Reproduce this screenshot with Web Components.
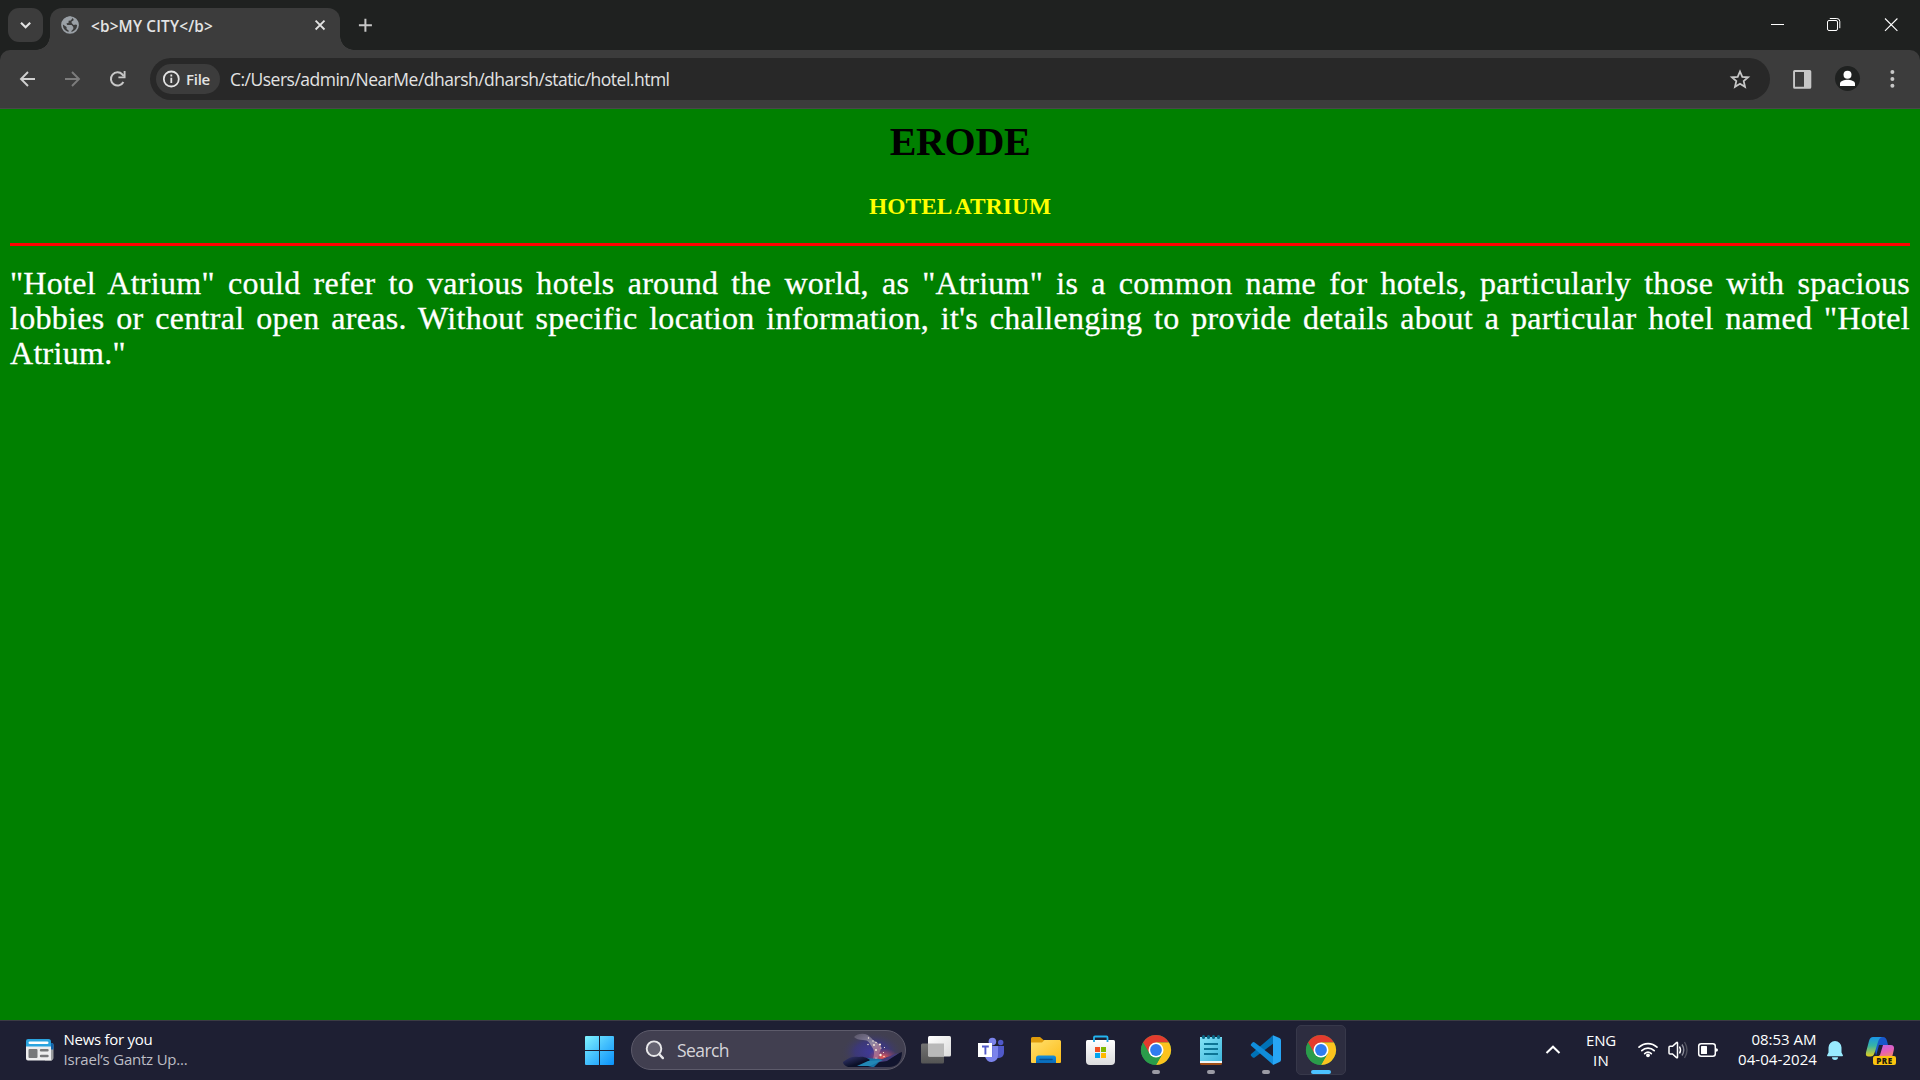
<!DOCTYPE html>
<html lang="en">
<head>
<meta charset="utf-8">
<title>MY CITY</title>
<style>
html,body{margin:0;height:100%;overflow:hidden;background:#1f2120}
body{font-family:"Open Sans","Noto Sans",sans-serif}
</style>
</head>
<body>
<desktop-screen></desktop-screen>
<script>
const define = (name, html, after) => {
  const t = document.createElement('template');
  t.innerHTML = html;
  customElements.define(name, class extends HTMLElement {
    constructor() {
      super();
      this.attachShadow({ mode: 'open' }).append(t.content.cloneNode(true));
    }
    connectedCallback() { if (after) after(this, this.shadowRoot); }
  });
};

/* Label that spreads its letters evenly to fill a given width. */
define('fit-text', `<style>
:host{display:block;white-space:nowrap;line-height:20px}
span{display:inline-block;white-space:pre}</style><span><slot></slot></span>`, (el, root) => {
  const s = root.querySelector('span');
  const w = +el.getAttribute('w');
  el.style.fontSize = el.getAttribute('size') + 'px';
  el.style.width = w + 'px';
  const nodes = root.querySelector('slot').assignedNodes({ flatten: true });
  const n = nodes.reduce((sum, node) => sum + node.textContent.length, 0);
  if (n) s.style.letterSpacing = ((w - s.getBoundingClientRect().width) / n) + 'px';
});

/* Icon box: width, height and view origin come from the "box" attribute. */
define('ui-icon', `<style>:host{display:block;flex:none}svg{display:block;overflow:hidden}</style><svg fill="none"></svg>`, (el, root) => {
  const svg = root.querySelector('svg');
  const b = el.getAttribute('box').split(' ');
  svg.setAttribute('viewBox', b.join(' '));
  svg.setAttribute('width', b[2]);
  svg.setAttribute('height', b[3]);
  svg.innerHTML = ICONS[el.getAttribute('name')];
});

const chrome = x => `<g transform="translate(${x} 1050)">
<circle r="15" fill="#2a9c4a"/>
<path d="M-13-7.5A15 15 0 0 1 13-7.5L0-7.5L-6.5 3.75Z" fill="#e33b2e"/>
<path d="M13-7.5A15 15 0 0 1 0 15L6.5 3.75L0-7.5Z" fill="#fcc31e"/>
<path d="M-13-7.5L-6.5 3.75A7.5 7.5 0 0 0 6.5 3.75L0 15A15 15 0 0 1-13-7.5Z" fill="#2a9c4a"/>
<circle r="7.5" fill="#fff"/><circle r="5.9" fill="#2f7cf0"/></g>`;

const ICONS = {
  chevron: '<path d="M21 22.7l4.6 4.6 4.6-4.6" stroke="#e3e3e3" stroke-width="2.1"/>',
  globe: '<circle cx="70" cy="25" r="8" stroke="#9aa0a6" stroke-width="1.7" fill="#3c3c3c"/><path d="M62.6 23C64 18.5 67 16.6 71 16.6L72.4 18.2L70.8 20.4L68.6 20.8V22.8L66.4 23.4L67.2 25H71.6L73.3 27V29L71.4 31V32.8A8 8 0 0 1 68.6 33V30.5L66.6 29V27L62.2 24ZM73.3 17.5A8.5 8.5 0 0 1 78.3 26L76 24.6L73.6 25L71.6 23V21.4L73.6 20.2Z" fill="#9aa0a6"/>',
  close: '<path d="M315.6 20.6l8.9 8.9m0-8.9l-8.9 8.9" stroke="#e3e3e3" stroke-width="1.8"/>',
  plus: '<path d="M365.4 18.8v13M358.9 25.3h13" stroke="#c7c7c7" stroke-width="2"/>',
  min: '<path d="M1771 24.5h13" stroke="#fff"/>',
  max: '<rect x="1827.5" y="20.5" width="10" height="10" rx="1.5" stroke="#fff"/><path d="M1829.8 18.5h7a3 3 0 0 1 3 3v6.7" stroke="#fff"/>',
  wclose: '<path d="M1885 18.5l12.4 12.4m0-12.4l-12.4 12.4" stroke="#fff" stroke-width="1.1"/>',
  back: '<path d="M35 79H21.5M28 72l-7 7 7 7" stroke="#d0d0d0" stroke-width="1.9"/>',
  fwd: '<path d="M65 79h13.5M72 72l7 7-7 7" stroke="#7c7c7c" stroke-width="1.9"/>',
  reload: '<path d="M123.4 82A6.6 6.6 0 1 1 122.4 74.5l1.4 1.7" stroke="#c7c7c7" stroke-width="2"/><path d="M124.6 71v6.4h-6.2" stroke="#c7c7c7" stroke-width="1.9"/>',
  info: '<circle cx="171.3" cy="79" r="7.5" stroke="#e3e3e3" stroke-width="1.8"/><path d="M171.3 77.7v5.2M171.3 74.6v1.9" stroke="#e3e3e3" stroke-width="1.8"/>',
  star: '<path d="M1740 71.5l2.3 5.3 5.8.5-4.4 3.8 1.3 5.7-5-3-5 3 1.3-5.7-4.4-3.8 5.8-.5z" stroke="#c7c7c7" stroke-width="1.8"/>',
  panel: '<path fill-rule="evenodd" d="M1794.7 70h15a1.6 1.6 0 0 1 1.6 1.6v15.6a1.6 1.6 0 0 1-1.6 1.6h-15a1.6 1.6 0 0 1-1.6-1.6V71.6a1.6 1.6 0 0 1 1.6-1.6zM1795 72v14.8h9V72z" fill="#c7c7c7"/>',
  user: '<circle cx="1847.5" cy="78.5" r="12.5" fill="#1f2120"/><circle cx="1847.5" cy="74.7" r="4" fill="#fff"/><path d="M1840 86v-2.2c0-3 4.6-4 7.5-4s7.5 1 7.5 4V86z" fill="#fff"/>',
  dots: '<g fill="#c7c7c7"><circle cx="1892.4" cy="72" r="2"/><circle cx="1892.4" cy="79" r="2"/><circle cx="1892.4" cy="85.8" r="2"/></g>',
  news: '<path d="M45 1043h6.5a2 2 0 0 1 2 2v12.5a3 3 0 0 1-3 3H45z" fill="#9a9c9e"/><path d="M48 1043h4a1.5 1.5 0 0 1 1.5 1.5v5H48z" fill="#0f62ab"/><path d="M26 1046h25v12.5a2 2 0 0 0 1 2H28a2 2 0 0 1-2-2z" fill="#eeeeef"/><path d="M28 1039h20.5a2.5 2.5 0 0 1 2.5 2.5v5H26V1041a2 2 0 0 1 2-2z" fill="#2ba4df"/><rect x="28.5" y="1041.5" width="20" height="2.6" rx="1.3" fill="#fff"/><rect x="28.5" y="1049" width="9" height="9" rx="1" fill="#77787a"/><path d="M41 1050.2h6.5M41 1056h6.5" stroke="#77787a" stroke-width="2.4" stroke-linecap="round"/>',
  start: '<defs><linearGradient id="w" gradientUnits="userSpaceOnUse" x1="585" y1="1036" x2="614" y2="1065"><stop stop-color="#80f3ff"/><stop offset=".5" stop-color="#43bffd"/><stop offset="1" stop-color="#0a91fb"/></linearGradient></defs><path d="M586 1036h13v14h-14v-13a1 1 0 0 1 1-1zM600 1036h13a1 1 0 0 1 1 1v13h-14zM585 1051h14v14h-13a1 1 0 0 1-1-1zM600 1051h14v13a1 1 0 0 1-1 1h-13z" fill="url(#w)"/>',
  search: '<circle cx="654" cy="1048.7" r="7.3" stroke="#e8e8ea" stroke-width="1.9" fill="#656371"/><path d="M659.3 1054.2l3.6 3.9" stroke="#e8e8ea" stroke-width="2.4" stroke-linecap="round"/>',
  volcano: '<defs><radialGradient id="h"><stop stop-color="#3f399a"/><stop offset=".55" stop-color="#3b3780" stop-opacity=".8"/><stop offset="1" stop-color="#413f51" stop-opacity="0"/></radialGradient><radialGradient id="r"><stop stop-color="#ef5c51"/><stop offset="1" stop-color="#a34470" stop-opacity="0"/></radialGradient><linearGradient id="g" x2=".6" y2="1"><stop stop-color="#696579" stop-opacity=".6"/><stop offset=".55" stop-color="#8d86a2"/><stop offset="1" stop-color="#a8688c"/></linearGradient><linearGradient id="b" x2="1" y2="1"><stop stop-color="#393b76"/><stop offset=".6" stop-color="#0b1028"/></linearGradient></defs><ellipse cx="872" cy="1052" rx="31" ry="20" fill="url(#h)"/><ellipse cx="883" cy="1057" rx="15" ry="9" fill="url(#r)"/><path d="M854 1037q4-4 11-3c4 1 6 4 8 6 6 3 9 6 8 9-2 4-2 6-3 10h-5c2-6 1-9-1-12-3-4-3-7-9-7q-6 0-9-3z" fill="url(#g)"/><path d="M845 1061q20-5 42-1l8 2-14 5h-32z" fill="#1672a5"/><path d="M843 1062c6-5 10-6 16-5 6-1 9 2 11 3l-6 5 8 2h-24q-5-2-5-5z" fill="url(#b)"/><path d="M902 1052c-4 1-6 4-11 5-6 0-8 3-12 5l-5 5h15c8 0 13-6 13-15z" fill="#11142e"/><path d="M899 1053c-6 1-10 4-17 6l-8 4 13-2z" fill="#453c7b"/><path d="M857 1066l11-5 15-1-13 6z" fill="#2287b5"/><g fill="#fff3df"><circle cx="868.5" cy="1038" r=".7"/><circle cx="873" cy="1041" r=".7"/><circle cx="868" cy="1044.5" r=".7"/><circle cx="876" cy="1042.5" r=".7"/><circle cx="874" cy="1045" r=".9"/><circle cx="880" cy="1044.5" r="1.1"/><circle cx="884.5" cy="1047.5" r=".6"/><circle cx="881" cy="1048" r=".6"/><circle cx="876" cy="1050" r=".9"/><circle cx="883.5" cy="1052.5" r=".6"/><circle cx="880.5" cy="1055" r="1.2"/><circle cx="884" cy="1056.5" r=".7"/><circle cx="876" cy="1058" r=".6"/></g>',
  taskview: '<defs><linearGradient id="a" x2="1" y2="1"><stop stop-color="#fff"/><stop offset="1" stop-color="#dcdcdc"/></linearGradient><linearGradient id="d" x2="0" y2="1"><stop stop-color="#727272"/><stop offset="1" stop-color="#545454"/></linearGradient></defs><rect x="921" y="1043.5" width="23" height="20" rx="1.5" fill="url(#d)"/><rect x="928" y="1036" width="23" height="20.5" rx="1.5" fill="url(#a)"/><path d="M928 1043.5h16v13h-14.5a1.5 1.5 0 0 1-1.5-1.5z" fill="#b9b9b9"/>',
  teams: '<circle cx="1000.7" cy="1042.5" r="2.7" fill="#5059c9"/><path d="M993 1046h11v6.5a5.5 5.5 0 0 1-8 5z" fill="#5059c9"/><circle cx="992.4" cy="1041.6" r="3.8" fill="#7b83eb"/><path d="M984 1046h14v9a6.5 6.5 0 0 1-13 1z" fill="#7b83eb"/><path d="M989 1043h3.5v14H987z" fill="#4d55b5" opacity=".45"/><rect x="978" y="1043" width="14" height="14" fill="#fff"/><path d="M982 1046.5h6.8M985.4 1046.5v8" stroke="#5059c9" stroke-width="1.9"/>',
  folder: '<defs><linearGradient id="f" x2="1" y2="1"><stop stop-color="#ffe06f"/><stop offset="1" stop-color="#fdbb16"/></linearGradient><linearGradient id="fb" x2="0" y2="1"><stop stop-color="#158edb"/><stop offset="1" stop-color="#0869b9"/></linearGradient></defs><path d="M1031 1043v-4.5a1.5 1.5 0 0 1 1.5-1.5h7.5l3.5 3H1060v5h-29z" fill="#df9b0b"/><path d="M1031 1042.5h11l2.5-2.5H1059.5a1.5 1.5 0 0 1 1.5 1.5V1062a1 1 0 0 1-1 1h-28a1 1 0 0 1-1-1z" fill="url(#f)"/><path d="M1036 1063v-5a2.5 2.5 0 0 1 2.5-2.5h15a2.5 2.5 0 0 1 2.5 2.5v5z" fill="url(#fb)"/><path d="M1040 1059.5h12" stroke="#064f91" stroke-width="1.5" stroke-linecap="round"/>',
  store: '<defs><linearGradient id="s" x2="0" y2="1"><stop stop-color="#fff"/><stop offset="1" stop-color="#dcdcdd"/></linearGradient></defs><path d="M1094 1042v-4.5a1 1 0 0 1 1-1h11.5a1 1 0 0 1 1 1v4.5" stroke="#23b4ef" stroke-width="1.8"/><path d="M1086 1041.5a1.5 1.5 0 0 1 1.5-1.5h26a1.5 1.5 0 0 1 1.5 1.5V1061a4 4 0 0 1-4 4h-21a4 4 0 0 1-4-4z" fill="url(#s)"/><path d="M1094 1040v2M1107.5 1040v2" stroke="#23a7df" stroke-width="1.8"/><path d="M1095 1047h5v5h-5z" fill="#f25022"/><path d="M1101 1047h5v5h-5z" fill="#7fba00"/><path d="M1095 1053h5v5h-5z" fill="#00a4ef"/><path d="M1101 1053h5v5h-5z" fill="#ffb900"/>',
  chrome1: chrome(1156),
  notepad: '<defs><linearGradient id="n" x2="1" y2="1"><stop stop-color="#84e3f6"/><stop offset="1" stop-color="#3fb7dc"/></linearGradient></defs><path d="M1200 1061h22v2.5a1.5 1.5 0 0 1-1.5 1.5h-19a1.5 1.5 0 0 1-1.5-1.5z" fill="#a14f16"/><path d="M1200 1037h22v26h-22z" fill="#eef6f8"/><path d="M1200 1038a1 1 0 0 1 1-1h20a1 1 0 0 1 1 1v23h-22z" fill="url(#n)"/><g fill="#0b6a89"><rect x="1202" y="1035" width="3" height="4" rx="1.5"/><rect x="1207" y="1035" width="3" height="4" rx="1.5"/><rect x="1212" y="1035" width="3" height="4" rx="1.5"/><rect x="1217" y="1035" width="3" height="4" rx="1.5"/></g><path d="M1204 1044h14M1204 1049h14M1204 1054h14" stroke="#0d7595" stroke-width="2"/>',
  vscode: '<path d="M1273 1035.3V1043.7L1254.7 1057.5q-1.2.7-2.2-.2l-1.3-1.3q-1-1.2.2-2.2z" fill="#0072b8"/><path d="M1254.7 1042.5q-1.2-.8-2.2.1l-1.3 1.3q-1 1.2.2 2.2L1273 1064.7V1056.5z" fill="#108ddb"/><path d="M1273 1035.2l6.5 2.7q1.5.7 1.5 2.3v19.6q0 1.6-1.5 2.3l-6.5 2.8z" fill="#27a5f5"/>',
  chrome2: chrome(1321),
  up: '<path d="M1546.5 1053l6.5-6.3 6.5 6.3" stroke="#fff" stroke-width="2"/>',
  wifi: '<g stroke="#fff" stroke-width="1.7" stroke-linecap="round"><path d="M1639 1047.2a13 13 0 0 1 18 0M1641.8 1050.6a9 9 0 0 1 12.4 0M1644.7 1053.6a5 5 0 0 1 6.6 0"/></g><circle cx="1648" cy="1055.3" r="1.9" fill="#fff"/>',
  volume: '<path d="M1669 1047.2a1 1 0 0 1 1-1h2.5l4-3.6q1-.7 1 .5v14q0 1.2-1 .5l-4-3.6h-2.5a1 1 0 0 1-1-1z" stroke="#fff" stroke-width="1.5"/><path d="M1679.5 1046.5q2 3.5 0 7" stroke="#fff" stroke-width="1.5"/><path d="M1682 1044.5q3.5 5.5 0 11" stroke="#8a8b98" stroke-width="1.4"/><path d="M1684.5 1042q5 8 0 16" stroke="#51525f" stroke-width="1.4"/>',
  battery: '<rect x="1698.7" y="1043.7" width="16.6" height="12.6" rx="2.5" stroke="#fff" stroke-width="1.5"/><rect x="1701" y="1046" width="6" height="8" rx=".5" fill="#fff"/><path d="M1716 1048.2v3.6q2-.3 2-1.8t-2-1.8z" fill="#fff"/>',
  bell: '<path d="M1835 1041a6.5 6.5 0 0 1 6.5 6.5v5l1.4 2.7q.3 1-.7 1h-14.4q-1 0-.7-1l1.4-2.7v-5a6.5 6.5 0 0 1 6.5-6.5z" fill="#99ebff"/><path d="M1832 1057.3h6a3 2.6 0 0 1-6 0z" fill="#99ebff"/>',
  copilot: '<defs><linearGradient id="c1" x2="0" y2="1"><stop stop-color="#1995e8"/><stop offset=".45" stop-color="#37b4a5"/><stop offset="1" stop-color="#e4cf1c"/></linearGradient><linearGradient id="c2" x2=".4" y2="1"><stop stop-color="#b366f0"/><stop offset=".6" stop-color="#e95fb4"/><stop offset="1" stop-color="#f08c63"/></linearGradient></defs><path d="M1873 1037h10q3 0 4 4l1 4h-9l-3 11z" fill="#1857ca"/><path d="M1880 1055l3-10h7.5q4.5 0 3.3 5l-1.3 5.5q-1 4-5 4h-14z" fill="url(#c2)"/><path d="M1873 1037h9q-3 1-4 5l-3.5 11q-1 3.5-4 3.5h-2q-3.5 0-2.4-4.5l2.9-11q1-4 4-4z" fill="url(#c1)"/>'
};

define('browser-tab', `<style>
:host{display:flex;position:relative;width:290px;height:42px;margin:8px 0 0 7px;background:#3c3c3c;border-radius:12px 12px 0 0;color:#e3e3e3}
:host::before,:host::after{content:"";position:absolute;bottom:0;width:14px;height:14px}
:host::before{left:-14px;background:radial-gradient(circle at 0 0,#0000 13.5px,#3c3c3c 14px)}
:host::after{right:-14px;background:radial-gradient(circle at 100% 0,#0000 13.5px,#3c3c3c 14px)}
fit-text{margin-left:-1px;padding-top:8px;font-weight:600}
.x{margin-left:98px}
</style><ui-icon name="globe" box="50 8 42 34"></ui-icon><fit-text w="122" size="15.3"><slot></slot></fit-text><ui-icon class="x" name="close" box="311 8 20 34"></ui-icon>`);

define('tab-strip', `<style>
:host{display:flex;height:50px;background:#1f2120}
.menu{width:35px;height:34px;margin:8px 0 0 8px;border-radius:11px;background:#3c3c3c;overflow:hidden}
.new{margin-left:10px}.win{display:flex;margin-left:auto}
</style><div class="menu"><ui-icon name="chevron" box="8 8 35 34"></ui-icon></div>
<browser-tab>&lt;b&gt;MY CITY&lt;/b&gt;</browser-tab>
<ui-icon class="new" name="plus" box="350 0 32 50"></ui-icon>
<div class="win"><ui-icon name="min" box="1749 0 57 50"></ui-icon><ui-icon name="max" box="1806 0 57 50"></ui-icon><ui-icon name="wclose" box="1863 0 57 50"></ui-icon></div>`);

define('address-bar', `<style>
:host{display:flex;align-items:center;width:1620px;height:42px;border-radius:21px;background:#282828;color:#e3e3e3;box-sizing:border-box;padding-left:6px}
.chip{display:flex;width:64px;height:30px;border-radius:15px;background:#3c3c3c}
.chip fit-text{padding-top:5px;font-weight:600}
.url{margin-left:10px}.star{margin-left:auto}
</style><div class="chip"><ui-icon name="info" box="156 64 30 30"></ui-icon><fit-text w="24" size="15">File</fit-text></div>
<fit-text class="url" w="439.5" size="17.5"><slot></slot></fit-text><ui-icon class="star" name="star" box="1720 64 50 30"></ui-icon>`);

define('tool-bar', `<style>
:host{display:block;height:59px;background:#1f2120}
.bar{display:flex;box-sizing:border-box;height:59px;background:#3c3c3c;border-bottom:1px solid #494949;border-radius:10px 10px 0 0;overflow:hidden}
address-bar{margin-top:8px}
</style><div class="bar"><ui-icon name="back" box="0 50 50 58"></ui-icon><ui-icon name="fwd" box="50 50 45 58"></ui-icon><ui-icon name="reload" box="95 50 55 58"></ui-icon>
<address-bar>C:/Users/admin/NearMe/dharsh/dharsh/static/hotel.html</address-bar>
<ui-icon name="panel" box="1770 50 55 58"></ui-icon><ui-icon name="user" box="1825 50 45 58"></ui-icon><ui-icon name="dots" box="1870 50 50 58"></ui-icon></div>`);

define('hotel-page', `<style>
:host{display:block;height:911px;box-sizing:border-box;padding:10px;background:#008000;font-family:"Liberation Serif",serif}
h1,h3{margin:0;text-align:center}
h1{font-size:40px;line-height:46px;letter-spacing:-.3px;color:#000}
h3{margin-top:27px;font-size:23.4px;line-height:28px;letter-spacing:.08px;word-spacing:-1px;color:#ff0}
hr{margin:23px 0 20px;border:0;height:3px;background:#f00}
p{margin:0;color:#fff;font-size:32px;line-height:35px;letter-spacing:.3px;-webkit-text-stroke:.3px #fff}
p span{display:block;white-space:nowrap;text-align-last:justify}
p span:last-child{text-align-last:left}
</style><h1>ERODE</h1><h3>HOTEL ATRIUM</h3><hr>
<p><span>"Hotel Atrium" could refer to various hotels around the world, as "Atrium" is a common name for hotels, particularly those with spacious</span>
<span>lobbies or central open areas. Without specific location information, it's challenging to provide details about a particular hotel named "Hotel</span>
<span>Atrium."</span></p>`);

define('task-button', `<style>
:host{display:grid;width:55px;height:59px;flex:none}
:host>*,::slotted(*){grid-area:1/1}
.tile{width:50px;height:50px;margin:4px 0 0 2px;box-sizing:border-box;border-radius:5px}
.dot{width:8px;height:4px;border-radius:2px;margin:49px 0 0 23px}
:host([open]) .dot{background:#9b9ba5}
:host([active]) .tile{background:#2d2d40;border:1px solid #37384a}
:host([active]) .dot{width:20px;margin-left:17px;background:#4cc2ff}
</style><div class="tile"></div><slot></slot><div class="dot"></div>`);

define('search-box', `<style>
:host{display:flex;box-sizing:border-box;width:275px;height:40px;margin:9px 3px 0 0;border:1px solid #5d5b6b;border-radius:20px;background:#413f50;color:#d6d5da;overflow:hidden}
fit-text{padding-top:9px}
.art{margin-left:auto}
</style><ui-icon name="search" box="632 1031 45 38"></ui-icon><fit-text w="52" size="17.5">Search</fit-text><ui-icon class="art" name="volcano" box="835 1031 70 38"></ui-icon>`);

define('task-bar', `<style>
:host{display:flex;box-sizing:border-box;height:60px;border-top:1px solid #3b3b44;background:#1e1f33;color:#fff}
.news{display:flex;width:571px}
.pair{padding-top:8px}
.news .pair{margin-left:-.5px}
.news .pair fit-text+fit-text{color:#bdbdc5}
.tray .lang{margin-left:19px;width:49px;padding-top:9px}
.lang fit-text+fit-text{margin-left:7px}
.time{width:79px}
.time fit-text:first-child{margin-left:13.5px}
.tray{display:flex;margin-left:auto}
.pre{display:grid;width:60px;height:59px}
.pre>*{grid-area:1/1}
.pre b{width:23px;height:9px;margin:35px 0 0 13px;border-radius:2px;background:#fbc40e;color:#201a10;font-size:8px;line-height:9px;text-align:center;letter-spacing:.5px;font-weight:800}
</style>
<div class="news"><ui-icon name="news" box="0 1021 64 59"></ui-icon><div class="pair"><fit-text w="89" size="15">News for you</fit-text><fit-text w="124" size="15">Israel’s Gantz Up...</fit-text></div></div>
<ui-icon name="start" box="571 1021 60 59"></ui-icon><search-box></search-box>
<task-button><ui-icon name="taskview" box="909 1021 55 59"></ui-icon></task-button>
<task-button><ui-icon name="teams" box="964 1021 55 59"></ui-icon></task-button>
<task-button><ui-icon name="folder" box="1019 1021 55 59"></ui-icon></task-button>
<task-button><ui-icon name="store" box="1074 1021 55 59"></ui-icon></task-button>
<task-button open><ui-icon name="chrome1" box="1129 1021 55 59"></ui-icon></task-button>
<task-button open><ui-icon name="notepad" box="1184 1021 55 59"></ui-icon></task-button>
<task-button open><ui-icon name="vscode" box="1239 1021 55 59"></ui-icon></task-button>
<task-button open active><ui-icon name="chrome2" box="1294 1021 55 59"></ui-icon></task-button>
<div class="tray"><ui-icon name="up" box="1538 1021 29 59"></ui-icon>
<div class="pair lang"><fit-text w="30" size="15">ENG</fit-text><fit-text w="16" size="15">IN</fit-text></div>
<ui-icon name="wifi" box="1635 1021 28 59"></ui-icon><ui-icon name="volume" box="1663 1021 30 59"></ui-icon><ui-icon name="battery" box="1693 1021 45 59"></ui-icon>
<div class="pair time"><fit-text w="65" size="15">08:53 AM</fit-text><fit-text w="79" size="15">04-04-2024</fit-text></div>
<ui-icon name="bell" box="1817 1021 43 59"></ui-icon>
<div class="pre"><ui-icon name="copilot" box="1860 1021 60 59"></ui-icon><b>PRE</b></div></div>`);

define('desktop-screen', `<style>:host{display:flex;flex-direction:column;width:1920px;height:1080px;overflow:hidden}</style>
<tab-strip></tab-strip><tool-bar></tool-bar><hotel-page></hotel-page><task-bar></task-bar>`);
</script>
</body>
</html>
